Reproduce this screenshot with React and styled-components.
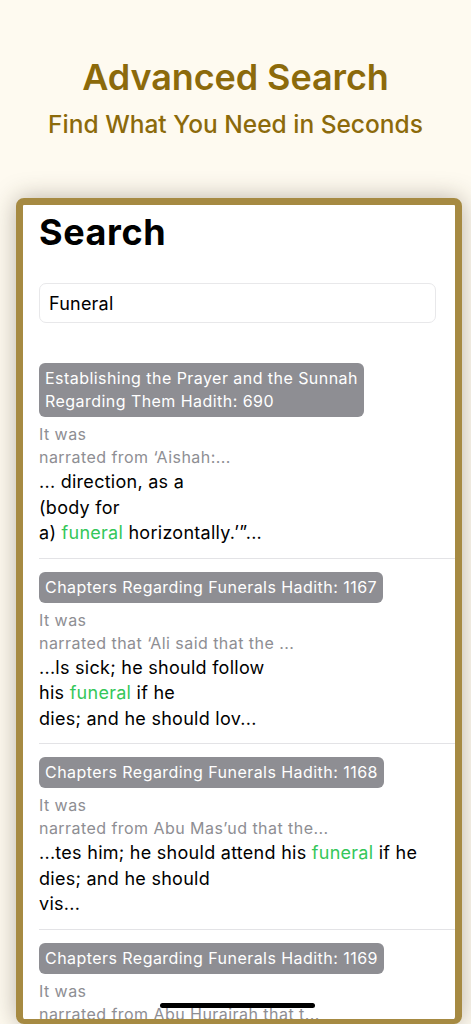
import React from "react";
import styled, { createGlobalStyle } from "styled-components";

const GlobalStyle = createGlobalStyle`
  html, body {
    margin: 0;
    padding: 0;
    background: #fefaf0;
  }
  body {
    font-family: Inter, "Noto Sans", "Liberation Sans", sans-serif;
    -webkit-font-smoothing: antialiased;
  }
`;

const results = [
  {
    id: 690,
    book: "Establishing the Prayer and the Sunnah\nRegarding Them Hadith: 690",
    lead: "It was\nnarrated from \u2018Aishah:...",
    body: [
      "... direction, as a\n(body for\na) ",
      { hit: "funeral" },
      " horizontally.\u2019\u201d...",
    ],
  },
  {
    id: 1167,
    book: "Chapters Regarding Funerals Hadith: 1167",
    lead: "It was\nnarrated that \u2018Ali said that the ...",
    body: [
      "...ls sick; he should follow\nhis ",
      { hit: "funeral" },
      " if he\ndies; and he should lov...",
    ],
  },
  {
    id: 1168,
    book: "Chapters Regarding Funerals Hadith: 1168",
    lead: "It was\nnarrated from Abu Mas\u2019ud that the...",
    body: [
      "...tes him; he should attend his ",
      { hit: "funeral" },
      " if he\ndies; and he should\nvis...",
    ],
  },
  {
    id: 1169,
    book: "Chapters Regarding Funerals Hadith: 1169",
    lead: "It was\nnarrated from Abu Hurairah that t...",
    body: [
      "...he has six rights over his\nbrother; he should follow his ",
      { hit: "funeral" },
      "...",
    ],
  },
];

function App() {
  return (
    <>
      <GlobalStyle />
      <Page>
        <Hero>
          <HeroTitle>Advanced Search</HeroTitle>
          <HeroSubtitle>Find What You Need in Seconds</HeroSubtitle>
        </Hero>
        <Device>
          <Screen>
            <ScreenTitle>Search</ScreenTitle>
            <SearchField value="Funeral" readOnly />
            <ResultList>
              {results.map((r) => (
                <ResultRow key={r.id}>
                  <BookTag>{r.book}</BookTag>
                  <Lead>{r.lead}</Lead>
                  <Snippet>
                    {r.body.map((part, i) =>
                      typeof part === "string" ? (
                        <React.Fragment key={i}>{part}</React.Fragment>
                      ) : (
                        <Hit key={i}>{part.hit}</Hit>
                      )
                    )}
                  </Snippet>
                </ResultRow>
              ))}
            </ResultList>
          </Screen>
          <HomeIndicator />
        </Device>
      </Page>
    </>
  );
}

const Page = styled.div`
  height: 100vh;
  display: flex;
  flex-direction: column;
  overflow: hidden;
  background: #fefaf0;
`;

const Hero = styled.header`
  display: flex;
  flex-direction: column;
  align-items: center;
  padding-top: 55px;
  height: 143px;
`;

const HeroTitle = styled.h1`
  margin: 0;
  font-size: 36px;
  line-height: 44px;
  font-weight: 600;
  color: #8c6a0b;
  letter-spacing: -0.1px;
`;

const HeroSubtitle = styled.h2`
  margin: 10px 0 0;
  font-size: 24.5px;
  line-height: 30px;
  font-weight: 500;
  color: #8c6a0b;
  letter-spacing: 0;
`;

const Device = styled.section`
  position: relative;
  flex: 1;
  margin: 0 9px 0 16px;
  border: 7px solid #a68a42;
  border-bottom-width: 5px;
  border-radius: 8px;
  background: #fff;
  box-shadow: 0 0 24px rgba(60, 50, 30, 0.35);
  overflow: hidden;
`;

const Screen = styled.div`
  height: 100%;
  overflow: hidden;
  padding: 5px 0 0 16px;
  box-sizing: border-box;
`;

const ScreenTitle = styled.h2`
  margin: 0;
  font-size: 36px;
  line-height: 44px;
  font-weight: 700;
  color: #000;
  letter-spacing: 0.6px;
`;

const SearchField = styled.input`
  display: block;
  box-sizing: border-box;
  width: calc(100% - 19px);
  height: 40px;
  margin-top: 29px;
  padding: 0 9px;
  border: 1px solid #e8e8ea;
  border-radius: 7px;
  background: #fff;
  font-family: inherit;
  font-size: 18px;
  letter-spacing: 0.2px;
  color: #000;
  outline: none;
`;

const ResultList = styled.ul`
  list-style: none;
  margin: 27px 0 0;
  padding: 0;
`;

const ResultRow = styled.li`
  padding: 13px 0 12px;
  border-bottom: 1px solid #e3e3e6;
`;

const BookTag = styled.div`
  display: inline-block;
  padding: 4px 6px;
  border-radius: 6px;
  background: #8e8e93;
  color: #fff;
  font-size: 16px;
  line-height: 23px;
  letter-spacing: 0.45px;
  white-space: pre-line;
`;

const Lead = styled.p`
  margin: 6px 0 0;
  font-size: 16px;
  line-height: 23px;
  letter-spacing: 0.45px;
  color: #8e8e93;
  white-space: pre-line;
`;

const Snippet = styled.p`
  margin: 0;
  font-size: 18px;
  line-height: 25.5px;
  letter-spacing: 0.27px;
  color: #000;
  white-space: pre-line;
`;

const Hit = styled.span`
  color: #34c759;
`;

const HomeIndicator = styled.div`
  position: absolute;
  left: 137px;
  bottom: 11px;
  width: 155px;
  height: 5px;
  border-radius: 3px;
  background: #000;
`;

export default App;
